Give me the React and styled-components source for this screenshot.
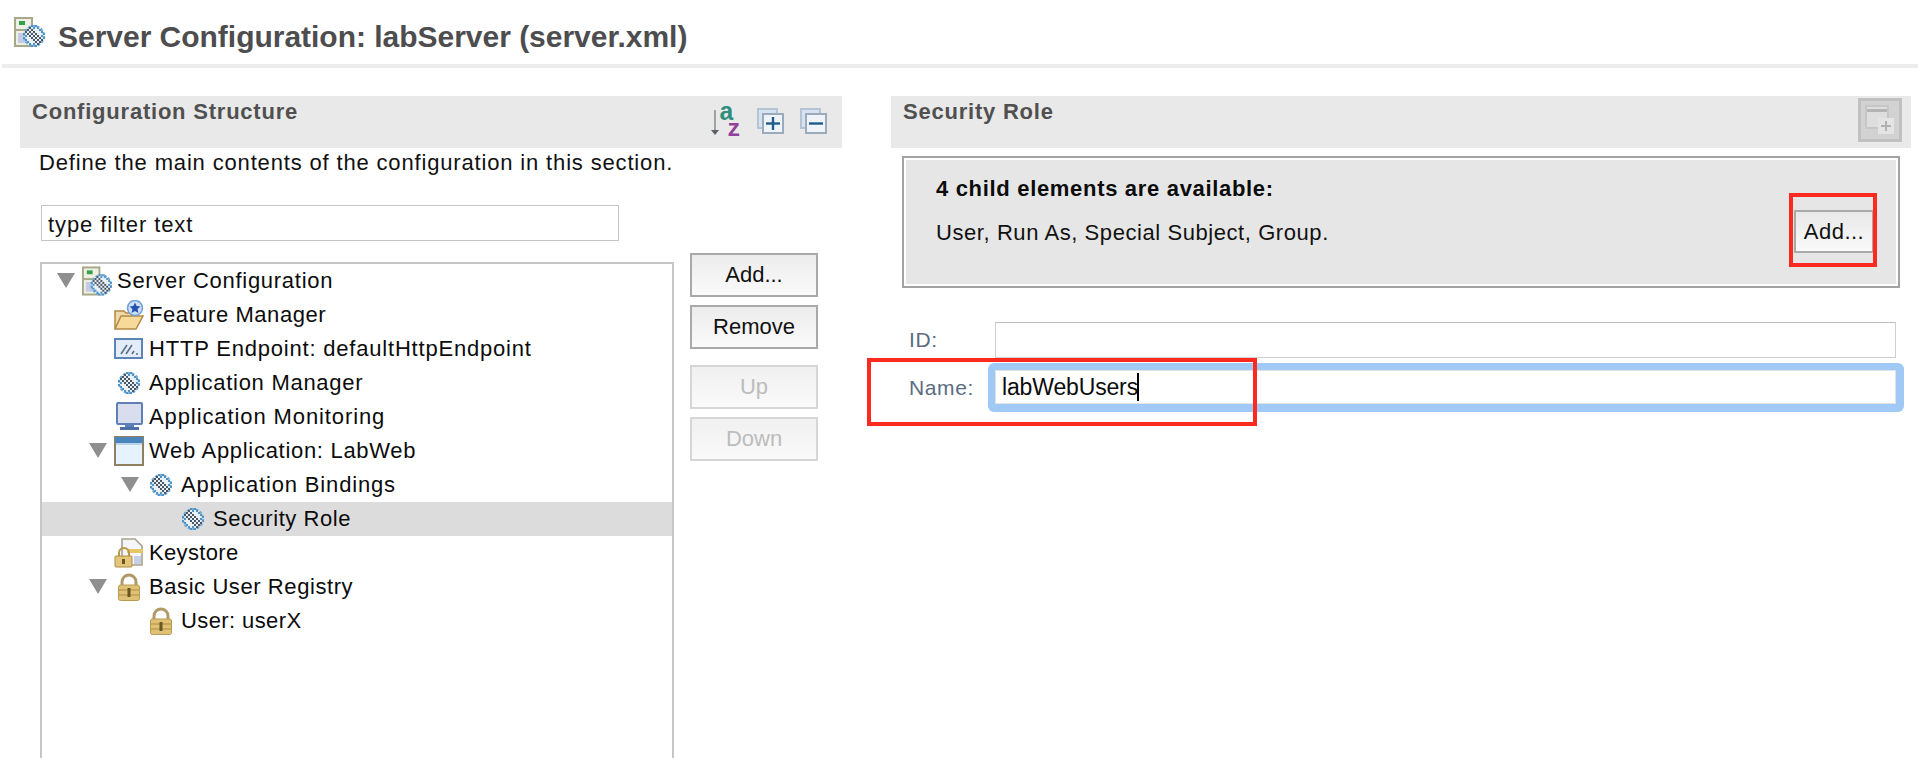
import React from "react"
import styled, { createGlobalStyle } from "styled-components"

const Global = createGlobalStyle`
    html, body {
        margin: 0;
        padding: 0;
        background: #fff;
    }
    body {
        font-family: "Liberation Sans", Arial, sans-serif;
        color: #111;
    }
    * { box-sizing: border-box; }
`

// icons, drawn on the 1.9x pixel grid of the original eclipse glyphs
const globeDots = () => {
    const dots = []
    for (let x = 0; x < 11; x++) {
        for (let y = 0; y < 11; y++) {
            const dist = Math.hypot(x - 5, y - 5)
            if ((x + y) % 2 === 0 && dist < 5.6) {
                const band = Math.abs(x - y) < 4
                if (band || dist > 3.6) {
                    dots.push(<rect key={`${x}-${y}`} x={x * 2} y={y * 2} width="2" height="2" fill={band ? "#4a5568" : "#4f93c6"} />)
                }
            }
        }
    }
    return dots
}

const GlobeDisc = () => (
    <>
        <circle cx="11" cy="11" r="10" fill="#e9f0f4" stroke="#6fa8d2" strokeWidth="2" strokeDasharray="3 1.5" />
        {globeDots()}
    </>
)

const GlobeMark = () => (
    <svg width="22" height="22" viewBox="0 0 22 22">
        <GlobeDisc />
    </svg>
)

const ServerIcon = () => (
    <svg width="31" height="30" viewBox="0 0 31 30">
        <rect x="1" y="1" width="17" height="28" fill="#eef0e6" stroke="#a8a888" strokeWidth="2" />
        <rect x="2" y="12" width="15" height="2" fill="#a8a888" />
        <rect x="5" y="4" width="6" height="4" fill="#35a04a" />
        <rect x="4" y="16" width="11" height="10" fill="#c5cbe6" />
        <g transform="translate(9 8)">
            <GlobeDisc />
        </g>
    </svg>
)

const FolderIcon = () => (
    <svg width="30" height="30" viewBox="0 0 30 30">
        <path d="M1 11h9l2 2h6v15H1z" fill="#f0d9a8" stroke="#b58945" strokeWidth="1.5" />
        <path d="M1 29l6-13h22l-7 13z" fill="#f7d99a" stroke="#b58945" strokeWidth="1.5" />
        <circle cx="21" cy="8" r="7.5" fill="#cfe0f5" stroke="#6f9fd6" strokeWidth="1.5" />
        <path d="M21 2.5l1.6 3.6 3.9.4-2.9 2.6.8 3.8-3.4-2-3.4 2 .8-3.8-2.9-2.6 3.9-.4z" fill="#2450b0" />
    </svg>
)

const EndpointIcon = () => (
    <svg width="30" height="30" viewBox="0 0 30 30">
        <rect x="1" y="5" width="27" height="19" fill="#e4ecf7" stroke="#5b84b8" strokeWidth="2" />
        <path d="M7 20l6-9M12 20l6-9" stroke="#5a6f8c" strokeWidth="1.6" fill="none" />
        <path d="M18 20l2-3M22 20h2" stroke="#5a6f8c" strokeWidth="1.6" fill="none" />
    </svg>
)

const MonitorIcon = () => (
    <svg width="30" height="30" viewBox="0 0 30 30">
        <rect x="3" y="1" width="25" height="21" rx="1" fill="#d9deee" stroke="#5f7fb8" strokeWidth="2" />
        <rect x="11" y="22" width="9" height="3" fill="#5f7fb8" />
        <rect x="6" y="25" width="19" height="3" fill="#4f6fa8" />
    </svg>
)

const WindowIcon = () => (
    <svg width="30" height="30" viewBox="0 0 30 30">
        <rect x="1" y="1" width="28" height="28" fill="#e6f3ff" stroke="#8f8060" strokeWidth="2" />
        <rect x="1" y="1" width="28" height="6" fill="#4a86bd" />
        <rect x="2" y="7" width="26" height="2" fill="#bcd4ea" />
    </svg>
)

const KeystoreIcon = () => (
    <svg width="30" height="30" viewBox="0 0 30 30">
        <path d="M8 1h13l7 7v19H8z" fill="#f4f6fa" stroke="#a8a08a" strokeWidth="1.6" />
        <rect x="20" y="18" width="7" height="8" fill="#c5cfe6" />
        <rect x="13" y="11" width="16" height="4" fill="#e6c660" />
        <path d="M5 19v-4a5 5 0 0 1 10 0v4" fill="none" stroke="#b8964a" strokeWidth="2" />
        <rect x="1" y="18" width="17" height="11" rx="1" fill="#e2c67c" stroke="#b08d3c" />
        <rect x="8" y="21" width="3" height="5" fill="#6b5520" />
    </svg>
)

const LockIcon = () => (
    <svg width="22" height="28" viewBox="0 0 22 28">
        <path d="M4 13V9a7 7 0 0 1 14 0v4" fill="none" stroke="#b09a68" strokeWidth="3" />
        <rect x="0.5" y="12" width="21" height="15.5" rx="2" fill="#dfc277" stroke="#bb9a4c" />
        <rect x="1" y="16" width="20" height="2" fill="#c8a75a" />
        <rect x="1" y="21" width="20" height="2" fill="#c8a75a" />
        <rect x="9.5" y="15" width="3" height="9" fill="#6b5520" />
    </svg>
)

const SortIcon = () => (
    <svg width="31" height="31" viewBox="0 0 31 31">
        <path d="M5 4v21" stroke="#8a9099" strokeWidth="1.6" fill="none" />
        <path d="M1 24h8l-4 5z" fill="#5c6066" />
        <text x="9" y="14" fontFamily="Liberation Mono, monospace" fontWeight="700" fontSize="25" fill="#2f8f7f">a</text>
        <text x="17" y="30" fontFamily="Liberation Mono, monospace" fontWeight="700" fontSize="23" fill="#93409a">z</text>
    </svg>
)

const TreeToggleIcon = ({ plus }) => (
    <svg width="27" height="26" viewBox="0 0 27 26">
        <rect x="1" y="1" width="19" height="19" fill="#d6e3ef" stroke="#b4c4d4" strokeWidth="2" />
        <rect x="6" y="6" width="20" height="19" fill="#f0f4f8" stroke="#9aabbd" strokeWidth="2" />
        <path d="M9 15.5h14" stroke="#1f5c8c" strokeWidth="2.4" />
        {plus && <path d="M16 9v13" stroke="#1f5c8c" strokeWidth="2.4" />}
    </svg>
)

const AddChildIcon = () => (
    <svg width="30" height="30" viewBox="0 0 30 30">
        <rect x="0" y="0" width="24" height="24" fill="#c6c6c6" />
        <rect x="2" y="2" width="20" height="20" fill="#dedede" />
        <rect x="2" y="4" width="20" height="3" fill="#b4b4b4" />
        <rect x="13" y="13" width="16" height="16" fill="#e4e4e4" />
        <path d="M21 16v10M16 21h10" stroke="#b0b0b0" strokeWidth="2" />
    </svg>
)

const rows = [
    { level: 0, open: true, icon: <ServerIcon />, label: "Server Configuration", tracking: 0.72 },
    { level: 1, icon: <FolderIcon />, label: "Feature Manager", tracking: 0.56 },
    { level: 1, icon: <EndpointIcon />, label: "HTTP Endpoint: defaultHttpEndpoint", tracking: 0.8 },
    { level: 1, icon: <GlobeMark />, label: "Application Manager", tracking: 0.72 },
    { level: 1, icon: <MonitorIcon />, label: "Application Monitoring", tracking: 0.9 },
    { level: 1, open: true, icon: <WindowIcon />, label: "Web Application: LabWeb", tracking: 0.7 },
    { level: 2, open: true, icon: <GlobeMark />, label: "Application Bindings", tracking: 0.84 },
    { level: 3, selected: true, icon: <GlobeMark />, label: "Security Role", tracking: 0.55 },
    { level: 1, icon: <KeystoreIcon />, label: "Keystore", tracking: 0.35 },
    { level: 1, open: true, icon: <LockIcon />, label: "Basic User Registry", tracking: 0.58 },
    { level: 2, icon: <LockIcon />, label: "User: userX", tracking: 0.4 },
]

export default function App() {
    return (<Styled.Page>
        <Global />
        <Styled.Header>
            <ServerIcon />
            <Styled.Title>Server Configuration: labServer (server.xml)</Styled.Title>
        </Styled.Header>
        <Styled.Main>
            <Styled.LeftColumn>
                <Styled.SectionBar>
                    <Styled.SectionTitle>Configuration Structure</Styled.SectionTitle>
                    <Styled.Tools>
                        <SortIcon />
                        <TreeToggleIcon plus />
                        <TreeToggleIcon />
                    </Styled.Tools>
                </Styled.SectionBar>
                <Styled.Description>Define the main contents of the configuration in this section.</Styled.Description>
                <Styled.Filter value="type filter text" readOnly />
                <Styled.TreeArea>
                    <Styled.Tree>
                        {rows.map((row) => <Styled.Row key={row.label} $level={row.level} $selected={row.selected}>
                            <Styled.Twisty>{row.open && <Styled.Arrow />}</Styled.Twisty>
                            <Styled.RowIcon>{row.icon}</Styled.RowIcon>
                            <Styled.RowLabel $tracking={row.tracking}>{row.label}</Styled.RowLabel>
                        </Styled.Row>)}
                    </Styled.Tree>
                    <Styled.ButtonColumn>
                        <Styled.Button>Add...</Styled.Button>
                        <Styled.Button>Remove</Styled.Button>
                        <Styled.Button disabled $spaced>Up</Styled.Button>
                        <Styled.Button disabled>Down</Styled.Button>
                    </Styled.ButtonColumn>
                </Styled.TreeArea>
            </Styled.LeftColumn>
            <Styled.RightColumn>
                <Styled.SectionBar>
                    <Styled.SectionTitle>Security Role</Styled.SectionTitle>
                    <Styled.AddChild><AddChildIcon /></Styled.AddChild>
                </Styled.SectionBar>
                <Styled.ChildBox>
                    <Styled.ChildText>
                        <Styled.ChildHeading>4 child elements are available:</Styled.ChildHeading>
                        <Styled.ChildList>User, Run As, Special Subject, Group.</Styled.ChildList>
                    </Styled.ChildText>
                    <Styled.AddWrap>
                        <Styled.SmallButton>Add...</Styled.SmallButton>
                        <Styled.AddMark />
                    </Styled.AddWrap>
                </Styled.ChildBox>
                <Styled.Form>
                    <Styled.FieldLabel>ID:</Styled.FieldLabel>
                    <Styled.IdInput readOnly />
                    <Styled.NameRow>
                        <Styled.NameMark />
                        <Styled.FieldLabel>Name:</Styled.FieldLabel>
                        <Styled.FocusRing>
                            <Styled.NameInput>labWebUsers<Styled.Caret /></Styled.NameInput>
                        </Styled.FocusRing>
                    </Styled.NameRow>
                </Styled.Form>
            </Styled.RightColumn>
        </Styled.Main>
    </Styled.Page>)
}

const Styled = {
    Page: styled.div`
        width: 1918px;
        height: 758px;
        overflow: hidden;
        background: #fff;
    `,
    Header: styled.header`
        display: flex;
        align-items: center;
        gap: 13px;
        height: 68px;
        margin-left: 2px;
        padding: 0 0 0 12px;
        border-bottom: 4px solid #ececec;
    `,
    Title: styled.h1`
        margin: 9px 0 0;
        font-size: 30px;
        font-weight: 700;
        letter-spacing: -0.02px;
        line-height: 36px;
        color: #4d4d4f;
    `,
    Main: styled.main`
        display: flex;
        gap: 49px;
        padding: 28px 7px 0 20px;
    `,
    LeftColumn: styled.section`
        display: flex;
        flex-direction: column;
        width: 822px;
        flex: none;
    `,
    RightColumn: styled.section`
        display: flex;
        flex-direction: column;
        width: 1020px;
        flex: none;
    `,
    SectionBar: styled.div`
        display: flex;
        justify-content: space-between;
        align-items: flex-start;
        height: 52px;
        padding: 4px 9px 0 12px;
        background: #e9e9e9;
    `,
    SectionTitle: styled.h2`
        margin: 0;
        font-size: 22px;
        line-height: 24px;
        font-weight: 700;
        letter-spacing: 0.78px;
        color: #505050;
    `,
    Tools: styled.div`
        display: flex;
        align-items: flex-start;
        gap: 16px;
        margin-right: 6px;
        margin-top: 6px;
        svg:not(:first-child) { margin-top: 2px; }
    `,
    AddChild: styled.div`
        display: flex;
        align-items: center;
        justify-content: center;
        width: 44px;
        height: 44px;
        margin-top: -2px;
        background: #d2d2d2;
        border: 3px solid #c0c0c0;
    `,
    Description: styled.p`
        margin: 3px 0 0 19px;
        font-size: 22px;
        line-height: 24px;
        letter-spacing: 0.84px;
        color: #111;
    `,
    Filter: styled.input`
        width: 578px;
        height: 36px;
        margin: 30px 0 0 21px;
        padding: 3px 6px 0;
        border: 1px solid #c4c4c4;
        outline: none;
        background: #fff;
        font-family: inherit;
        font-size: 22px;
        letter-spacing: 0.9px;
        color: #111;
    `,
    TreeArea: styled.div`
        display: flex;
        align-items: flex-start;
        gap: 16px;
        margin: 12px 0 0 20px;
    `,
    Tree: styled.div`
        width: 634px;
        height: 520px;
        margin-top: 9px;
        border: 2px solid #c6c6c6;
        flex: none;
    `,
    Row: styled.div`
        display: flex;
        align-items: center;
        height: 34px;
        padding-left: ${(p) => 15 + p.$level * 32}px;
        background: ${(p) => (p.$selected ? "#dcdcdc" : "transparent")};
    `,
    Twisty: styled.span`
        display: block;
        width: 25px;
        flex: none;
    `,
    Arrow: styled.span`
        display: block;
        width: 0;
        height: 0;
        border-left: 9px solid transparent;
        border-right: 9px solid transparent;
        border-top: 15px solid #8f8f8f;
        margin-bottom: 2px;
    `,
    RowIcon: styled.span`
        display: flex;
        align-items: center;
        justify-content: center;
        width: 30px;
        height: 30px;
        margin-right: 5px;
        flex: none;
    `,
    RowLabel: styled.span`
        font-size: 22px;
        letter-spacing: ${(p) => p.$tracking}px;
        white-space: nowrap;
        color: #0c0c0c;
    `,
    ButtonColumn: styled.div`
        display: flex;
        flex-direction: column;
        gap: 8px;
        width: 128px;
    `,
    Button: styled.button`
        height: 44px;
        margin-top: ${(p) => (p.$spaced ? "8px" : "0")};
        border: 2px solid #a9a9a9;
        border-radius: 0;
        background: linear-gradient(#ececec, #fafafa);
        font-family: inherit;
        font-size: 22px;
        color: #111;
        padding: 0;
        &:disabled {
            border-color: #d6d6d6;
            background: linear-gradient(#f0f0f0, #fafafa);
            color: #bcbcbc;
        }
    `,
    ChildBox: styled.div`
        display: flex;
        justify-content: space-between;
        width: 998px;
        height: 132px;
        margin: 8px 0 0 11px;
        padding: 0 24px 0 32px;
        background: #e6e6e6;
        border: 2px solid #a3a3a3;
        box-shadow: inset 0 0 0 2px #fff;
    `,
    ChildText: styled.div`
        padding-top: 19px;
    `,
    ChildHeading: styled.div`
        font-size: 22px;
        line-height: 24px;
        font-weight: 700;
        letter-spacing: 0.68px;
        color: #0c0c0c;
    `,
    ChildList: styled.div`
        margin-top: 20px;
        font-size: 22px;
        line-height: 24px;
        letter-spacing: 0.57px;
        color: #111;
    `,
    AddWrap: styled.div`
        position: relative;
        margin-top: 52px;
        height: 43px;
    `,
    SmallButton: styled.button`
        display: block;
        width: 80px;
        height: 43px;
        padding: 0;
        border: 2px solid #aaa;
        border-radius: 0;
        background: linear-gradient(#e8e8e8, #fafafa);
        font-family: inherit;
        font-size: 22px;
        letter-spacing: 0.5px;
        color: #111;
    `,
    AddMark: styled.div`
        position: absolute;
        left: -5px;
        top: -17px;
        width: 88px;
        height: 74px;
        border: 4px solid #ff2a1f;
    `,
    Form: styled.div`
        display: grid;
        grid-template-columns: 79px 1fr;
        align-items: center;
        row-gap: 5px;
        margin: 34px 7px 0 18px;
    `,
    FieldLabel: styled.label`
        font-size: 21px;
        letter-spacing: 0.6px;
        color: #5b6b80;
    `,
    IdInput: styled.input`
        width: auto;
        height: 36px;
        margin: 0 8px 0 7px;
        border: 1px solid #cfcfcf;
        border-top-color: #bdbdbd;
        outline: none;
        background: #fff;
    `,
    NameRow: styled.div`
        position: relative;
        display: grid;
        grid-template-columns: 79px 1fr;
        align-items: center;
        grid-column: 1 / -1;
    `,
    NameMark: styled.div`
        position: absolute;
        left: -42px;
        top: -5px;
        width: 390px;
        height: 68px;
        border: 4px solid #ff2a1f;
        z-index: 2;
    `,
    FocusRing: styled.div`
        padding: 7px 8px 8px 7px;
        border-radius: 6px;
        background: #a0c9f5;
    `,
    NameInput: styled.div`
        display: flex;
        align-items: center;
        height: 34px;
        padding: 0 0 0 6px;
        border: 1px solid #e2e2e2;
        background: #fff;
        font-size: 23px;
        letter-spacing: -0.15px;
        color: #0c0c0c;
    `,
    Caret: styled.span`
        display: block;
        width: 2px;
        height: 28px;
        margin-left: -1px;
        background: #000;
    `,
}
